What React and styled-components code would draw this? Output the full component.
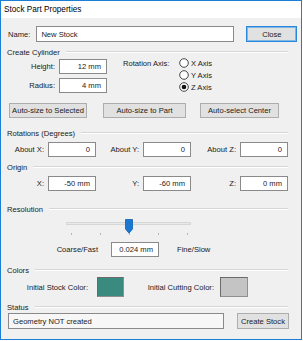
import React from "react";
import styled, { createGlobalStyle } from "styled-components";

const Global = createGlobalStyle`
  html, body { margin: 0; padding: 0; background: #ffffff; }
  body { font-family: "Liberation Sans", Arial, sans-serif; }
  * { box-sizing: border-box; }
`;

const Window = styled.div`
  width: 302px;
  height: 340px;
  border: 1px solid #1c7fd6;
  background: #f0f0f0;
  display: flex;
  flex-direction: column;
  color: #1a1a1a;
  font-size: 7.6px;
  overflow: hidden;
`;

const TitleBar = styled.div`
  height: 17px;
  background: #ffffff;
  display: flex;
  align-items: center;
  padding-left: 3px;
  font-size: 8.2px;
  color: #000;
`;

const Content = styled.div`
  display: flex;
  flex-direction: column;
  padding: 0 8px 0 6px;
`;

const Row = styled.div`
  display: flex;
  align-items: center;
  height: ${(p) => p.$h || 15}px;
  margin-top: ${(p) => p.$mt || 0}px;
  padding-left: ${(p) => p.$pl || 0}px;
`;

const Label = styled.span`
  display: inline-block;
  width: ${(p) => (p.$w ? p.$w + "px" : "auto")};
  text-align: ${(p) => p.$align || "left"};
  margin-left: ${(p) => p.$ml || 0}px;
  margin-right: ${(p) => (p.$mr === undefined ? 4 : p.$mr)}px;
  white-space: nowrap;
  flex-shrink: 0;
`;

const TextBox = styled.div`
  width: ${(p) => p.$w || 48}px;
  height: ${(p) => p.$h || 15}px;
  margin-left: ${(p) => p.$ml || 0}px;
  background: ${(p) => p.$bg || "#ffffff"};
  border: 1px solid #8a8a8a;
  display: flex;
  align-items: center;
  justify-content: ${(p) => (p.$left ? "flex-start" : "flex-end")};
  padding: 0 5px 0 4px;
  white-space: nowrap;
  flex-shrink: 0;
`;

const Button = styled.div`
  width: ${(p) => p.$w}px;
  height: ${(p) => p.$h || 15}px;
  margin-left: ${(p) => p.$ml || 0}px;
  background: #e1e1e1;
  border: 1px solid ${(p) => (p.$default ? "#2a86d8" : "#adadad")};
  box-shadow: ${(p) => (p.$default ? "inset 0 0 0 1px #7fb6e6" : "none")};
  display: flex;
  align-items: center;
  justify-content: center;
  white-space: nowrap;
  flex-shrink: 0;
`;

const HeaderRow = styled.div`
  display: flex;
  align-items: center;
  height: 10px;
  margin-top: ${(p) => p.$mt || 0}px;
`;

const HeaderLine = styled.div`
  flex: 1;
  margin-left: 6px;
  margin-right: 5px;
  height: 2px;
  border-top: 1px solid #d6d6d6;
  border-bottom: 1px solid #ffffff;
`;

const CylBlock = styled.div`
  display: flex;
  height: 38px;
`;

const FieldColumn = styled.div`
  display: flex;
  flex-direction: column;
  gap: 4px;
  padding-top: 2px;
`;

const RadioColumn = styled.div`
  display: flex;
  flex-direction: column;
`;

const RadioRow = styled.div`
  display: flex;
  align-items: center;
  height: 12px;
  gap: 2px;
`;

const AxisLabel = styled.div`
  height: 12px;
  display: flex;
  align-items: center;
  margin-left: 16px;
  width: 56px;
`;

const SliderArea = styled.div`
  height: 22px;
  margin-top: 2px;
  display: flex;
  flex-direction: column;
  padding-left: 59px;
`;

const TrackWrap = styled.div`
  position: relative;
  width: 125px;
  height: 17px;
  display: flex;
  align-items: center;
`;

const Track = styled.div`
  width: 100%;
  height: 3px;
  margin-top: -2px;
  background: #e7eaea;
  border: 1px solid #d6d6d6;
`;

const Thumb = styled.svg`
  position: absolute;
  top: 3px;
`;

const Ticks = styled.div`
  width: 117px;
  margin-left: 5px;
  height: 2px;
  display: flex;
  justify-content: space-between;
`;

const Tick = styled.div`
  width: 1px;
  height: 2px;
  background: #b5b5b5;
`;

const Swatch = styled.div`
  width: ${(p) => p.$w}px;
  height: 20px;
  background: ${(p) => p.$color};
  border: 1px solid #8f8f8f;
  border-left-color: #6a6a6a;
  border-top-color: #6a6a6a;
  margin-left: ${(p) => p.$ml || 0}px;
  flex-shrink: 0;
`;

function Radio({ checked, label }) {
  return (
    <RadioRow>
      <svg width="10" height="10" viewBox="0 0 10 10">
        <circle cx="5" cy="5" r="4.3" fill="#fff" stroke="#333" strokeWidth="0.9" />
        {checked && <circle cx="5" cy="5" r="2.3" fill="#111" />}
      </svg>
      <span>{label}</span>
    </RadioRow>
  );
}

function Header({ children, mt }) {
  return (
    <HeaderRow $mt={mt}>
      <span>{children}</span>
      <HeaderLine />
    </HeaderRow>
  );
}

function Field({ label, lw, value, ml }) {
  return (
    <>
      <Label $w={lw} $align="right" $ml={ml}>
        {label}
      </Label>
      <TextBox>{value}</TextBox>
    </>
  );
}

export default function App() {
  const sliderValue = 0.5;
  return (
    <>
      <Global />
      <Window>
        <TitleBar>Stock Part Properties</TitleBar>
        <Content>
          <Row $mt={8} $h={16} $pl={1}>
            <Label $mr={6}>Name:</Label>
            <TextBox $w={198} $h={16} $left>
              New Stock
            </TextBox>
            <Button $w={51} $h={16} $ml={12} $default>
              Close
            </Button>
          </Row>

          <Header mt={5}>Create Cylinder</Header>

          <CylBlock>
            <FieldColumn>
              <Row>
                <Field label="Height:" lw={48} value="12 mm" ml={0} />
              </Row>
              <Row>
                <Field label="Radius:" lw={48} value="4 mm" ml={0} />
              </Row>
            </FieldColumn>
            <AxisLabel>Rotation Axis:</AxisLabel>
            <RadioColumn>
              <Radio label="X Axis" />
              <Radio label="Y Axis" />
              <Radio label="Z Axis" checked />
            </RadioColumn>
          </CylBlock>

          <Row $mt={8} $pl={2}>
            <Button $w={78}>Auto-size to Selected</Button>
            <Button $w={83} $ml={16}>
              Auto-size to Part
            </Button>
            <Button $w={79} $ml={14}>
              Auto-select Center
            </Button>
          </Row>

          <Header mt={10}>Rotations (Degrees)</Header>

          <Row $mt={4}>
            <Field label="About X:" lw={37} value="0" />
            <Field label="About Y:" lw={43} value="0" />
            <Field label="About Z:" lw={45} value="0" />
          </Row>

          <Header mt={5}>Origin</Header>

          <Row $mt={4}>
            <Field label="X:" lw={37} value="-50 mm" />
            <Field label="Y:" lw={43} value="-60 mm" />
            <Field label="Z:" lw={45} value="0 mm" />
          </Row>

          <Header mt={13}>Resolution</Header>

          <SliderArea>
            <TrackWrap>
              <Track />
              <Thumb
                width="8"
                height="15"
                viewBox="0 0 8 15"
                style={{ left: `${5 + sliderValue * 116 - 4}px` }}
              >
                <path d="M0.5 0.5 H7.5 V10 L4 14.2 L0.5 10 Z" fill="#1a78d2" stroke="#0d5fb0" strokeWidth="0.8" />
              </Thumb>
            </TrackWrap>
            <Ticks>
              <Tick />
              <Tick />
              <Tick />
              <Tick />
              <Tick />
            </Ticks>
          </SliderArea>

          <Row $mt={4}>
            <Label $w={91} $align="right" $mr={13}>
              Coarse/Fast
            </Label>
            <TextBox>0.024 mm</TextBox>
            <Label $ml={18}>Fine/Slow</Label>
          </Row>

          <Header mt={8}>Colors</Header>

          <Row $mt={2} $h={20}>
            <Label $w={81} $align="right" $mr={9}>
              Initial Stock Color:
            </Label>
            <Swatch $w={27} $color="#3b8a7f" />
            <Label $w={90} $align="right" $mr={6}>
              Initial Cutting Color:
            </Label>
            <Swatch $w={28} $color="#c4c4c4" />
          </Row>

          <Header mt={5}>Status</Header>

          <Row $mt={1} $h={16} $pl={1}>
            <TextBox $w={216} $h={16} $bg="#f7f7f7" $left>
              Geometry NOT created
            </TextBox>
            <Button $w={52} $h={16} $ml={13}>
              Create Stock
            </Button>
          </Row>
        </Content>
      </Window>
    </>
  );
}
